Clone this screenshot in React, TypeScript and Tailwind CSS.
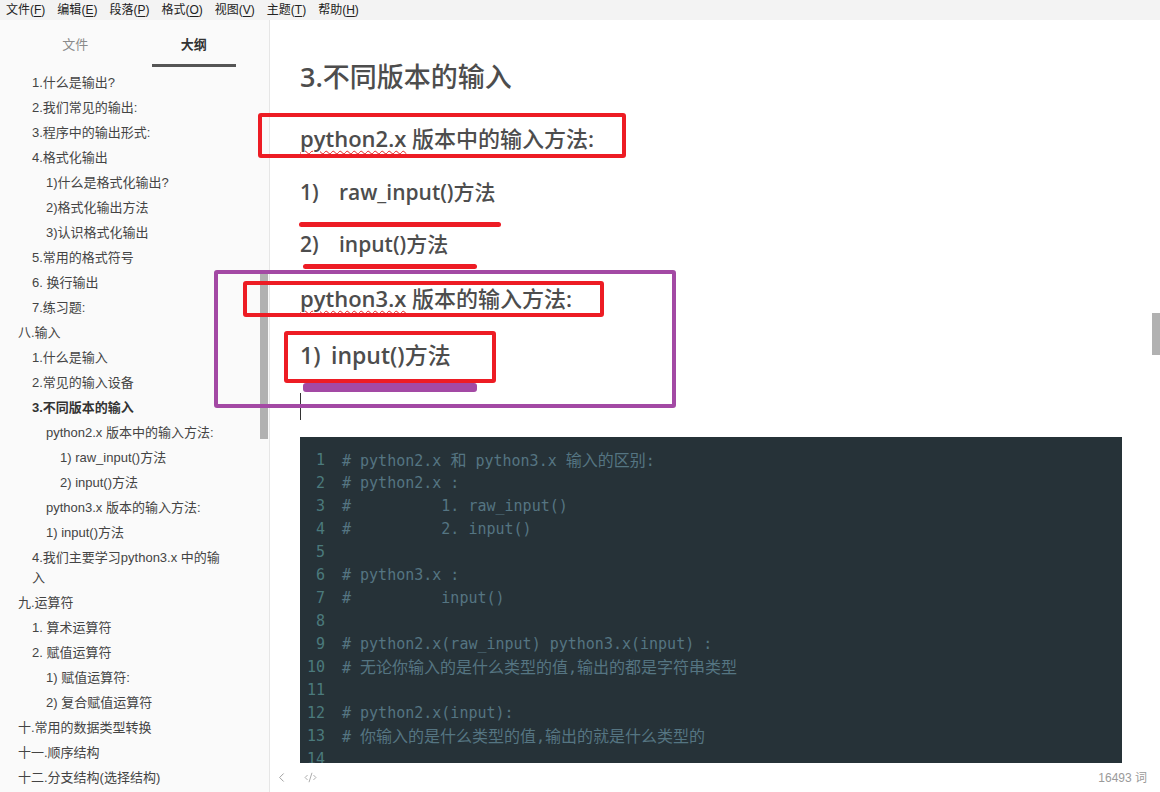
import { ChevronLeft, CodeXml } from 'lucide-react';

const menus = [
  ['文件', 'F'],
  ['编辑', 'E'],
  ['段落', 'P'],
  ['格式', 'O'],
  ['视图', 'V'],
  ['主题', 'T'],
  ['帮助', 'H'],
];

// [text, level, bold]
const outline: [string, number, boolean?][] = [
  ['1.什么是输出?', 1],
  ['2.我们常见的输出:', 1],
  ['3.程序中的输出形式:', 1],
  ['4.格式化输出', 1],
  ['1)什么是格式化输出?', 2],
  ['2)格式化输出方法', 2],
  ['3)认识格式化输出', 2],
  ['5.常用的格式符号', 1],
  ['6. 换行输出', 1],
  ['7.练习题:', 1],
  ['八.输入', 0],
  ['1.什么是输入', 1],
  ['2.常见的输入设备', 1],
  ['3.不同版本的输入', 1, true],
  ['python2.x 版本中的输入方法:', 2],
  ['1) raw_input()方法', 3],
  ['2) input()方法', 3],
  ['python3.x 版本的输入方法:', 2],
  ['1) input()方法', 2],
  ['4.我们主要学习python3.x 中的输\n入', 1],
  ['九.运算符', 0],
  ['1. 算术运算符', 1],
  ['2. 赋值运算符', 1],
  ['1) 赋值运算符:', 2],
  ['2) 复合赋值运算符', 2],
  ['十.常用的数据类型转换', 0],
  ['十一.顺序结构', 0],
  ['十二.分支结构(选择结构)', 0],
];

const indent = ['pl-[18px]', 'pl-[32px]', 'pl-[46px]', 'pl-[60px]'];

const code = [
  '# python2.x 和 python3.x 输入的区别:',
  '# python2.x :',
  '#          1. raw_input()',
  '#          2. input()',
  '',
  '# python3.x :',
  '#          input()',
  '',
  '# python2.x(raw_input) python3.x(input) :',
  '# 无论你输入的是什么类型的值,输出的都是字符串类型',
  '',
  '# python2.x(input):',
  '# 你输入的是什么类型的值,输出的就是什么类型的',
  '',
];

const cjk = /([\u4e00-\u9fff]+)/;

function CodeText({ text }: { text: string }) {
  return (
    <>
      {text.split(cjk).map((p, i) =>
        cjk.test(p) ? (
          <span key={i} className="text-[16px]">{p}</span>
        ) : (
          <span key={i}>{p}</span>
        )
      )}
    </>
  );
}

// latin runs semibold, chinese runs medium (bold CJK looks too heavy)
function Heading({ text }: { text: string }) {
  return (
    <>
      {text.split(cjk).map((p, i) =>
        cjk.test(p) ? (
          <span key={i} className="font-medium">{p}</span>
        ) : (
          <span key={i}>{p}</span>
        )
      )}
    </>
  );
}

const sans = "font-['Liberation_Sans','Noto_Sans_CJK_SC',sans-serif]";
const body = "font-['Open_Sans','Noto_Sans_CJK_SC',sans-serif]";
const spell = 'underline decoration-wavy decoration-[#e02020] decoration-1 underline-offset-[3px]';

export default function App() {
  return (
    <div className="relative w-[1160px] h-[792px] overflow-hidden flex flex-col bg-white">
      {/* Menu bar */}
      <div className={`h-[20px] shrink-0 bg-[#f3f3f3] flex items-center gap-[12px] pl-[6px] text-[12px] text-[#222] ${sans}`}>
        {menus.map(([name, key]) => (
          <span key={key} className="leading-[20px]">
            {name}(<span className="underline underline-offset-2">{key}</span>)
          </span>
        ))}
      </div>

      <div className="flex flex-1 min-h-0">
        {/* Sidebar */}
        <aside className={`relative w-[270px] shrink-0 bg-[#fafafa] border-r border-[#e6e6e6] flex flex-col ${sans}`}>
          <div className="flex px-[16px] h-[48px] shrink-0">
            <div className="flex-1 flex flex-col items-center pt-[15px]">
              <span className="text-[13px] leading-[20px] text-[#8a8a8a]">文件</span>
            </div>
            <div className="flex-1 flex flex-col items-center pt-[15px]">
              <span className="text-[13px] leading-[20px] text-[#333] font-bold">大纲</span>
              <div className="mt-[9px] h-[3px] w-[84px] bg-[#555]" />
            </div>
          </div>
          <ul className="pt-[2px] pr-[24px] text-[13px] text-[#444]">
            {outline.map(([t, lvl, bold], i) => (
              <li
                key={i}
                className={`${indent[lvl]} py-[2.5px] leading-[20px] whitespace-pre-line ${bold ? 'font-bold text-[#333]' : ''}`}
              >
                {t}
              </li>
            ))}
          </ul>
          <div className="absolute right-[1px] top-[253px] w-[8px] h-[166px] bg-[#b1b1b1]" />
        </aside>

        {/* Editor */}
        <main className="relative flex-1 flex flex-col min-w-0">
          <div className={`flex-1 min-h-0 overflow-hidden pl-[30px] pr-[38px] text-[#4d4d4d] ${body}`}>
            <h2 className="mt-[37px] h-[40px] leading-[40px] text-[27px] font-semibold">
              <Heading text="3.不同版本的输入" />
            </h2>
            <h3 className="mt-[23px] h-[36px] leading-[36px] text-[22px] font-semibold">
              <span className={spell}>python2.x</span> <Heading text="版本中的输入方法:" />
            </h3>
            <p className="mt-[20px] h-[32px] leading-[32px] text-[21px] font-semibold flex">
              <span className="w-[39px]">1)</span>raw_input()<span className="font-medium">方法</span>
            </p>
            <p className="mt-[20px] h-[32px] leading-[32px] text-[21px] font-semibold flex">
              <span className="w-[39px]">2)</span>input()<span className="font-medium">方法</span>
            </p>
            <h3 className="mt-[20px] h-[36px] leading-[36px] text-[22px] font-semibold">
              <span className={spell}>python3.x</span> <Heading text="版本的输入方法:" />
            </h3>
            <p className="mt-[21px] h-[36px] leading-[36px] text-[23px] font-semibold flex">
              <span className="w-[31px]">1)</span>input()<span className="font-medium">方法</span>
            </p>
            <div className="mt-[20px] h-[27px] w-px bg-[#333]" />

            <div className="mt-[17px] bg-[#263238] pt-[12px] pl-[7px] font-['DejaVu_Sans_Mono','Noto_Sans_CJK_SC',monospace] text-[15px] leading-[23px]">
              {code.map((line, i) => (
                <div key={i} className="flex h-[23px] whitespace-pre">
                  <span className="w-[18px] text-right text-[#4b7a7c]">{i + 1}</span>
                  <span className="ml-[17px] text-[#557582]">
                    <CodeText text={line} />
                  </span>
                </div>
              ))}
            </div>
          </div>

          {/* Status bar */}
          <div className={`h-[29px] shrink-0 bg-white flex items-center pl-[4px] pr-[13px] text-[#9a9a9a] ${sans}`}>
            <ChevronLeft className="w-[15px] h-[15px]" strokeWidth={1.5} />
            <CodeXml className="ml-[15px] w-[13px] h-[13px]" strokeWidth={1.5} />
            <span className="ml-auto text-[12px]">16493 词</span>
          </div>

          <div className="absolute right-0 top-[293px] w-[8px] h-[42px] bg-[#b1b1b1]" />
        </main>
      </div>

      {/* Annotations drawn over the screenshot */}
      <div className="absolute left-[258px] top-[113px] w-[368px] h-[45px] border-[4px] border-[#ed1c24] rounded-[3px]" />
      <div className="absolute left-[299px] top-[222px] w-[202px] h-[5px] bg-[#ed1c24] rounded-full" />
      <div className="absolute left-[303px] top-[264px] w-[174px] h-[5px] bg-[#ed1c24] rounded-full" />
      <div className="absolute left-[214px] top-[270px] w-[462px] h-[138px] border-[4px] border-[#a349a4] rounded-[3px]" />
      <div className="absolute left-[243px] top-[281px] w-[361px] h-[36px] border-[4px] border-[#ed1c24] rounded-[3px]" />
      <div className="absolute left-[284px] top-[331px] w-[212px] h-[52px] border-[4px] border-[#ed1c24] rounded-[3px]" />
      <div className="absolute left-[303px] top-[383px] w-[174px] h-[9px] bg-[#a349a4] rounded-[3px]" />
    </div>
  );
}
